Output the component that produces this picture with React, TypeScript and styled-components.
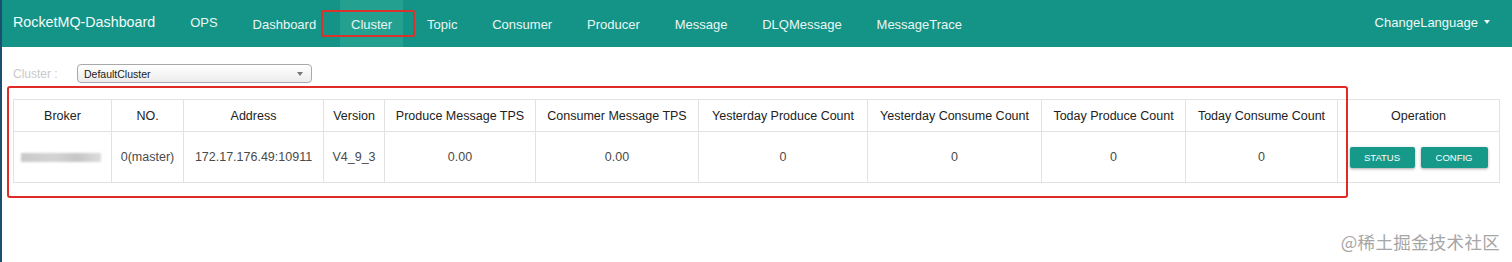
import React from "react";
import styled, { createGlobalStyle } from "styled-components";

const Global = createGlobalStyle`
  html, body { margin: 0; padding: 0; background: #fff; }
  body { font-family: "Liberation Sans", Arial, sans-serif; }
`;

const Page = styled.div`
  position: relative;
  min-height: 262px;
  border-left: 2px solid #1b4f70;
  box-sizing: border-box;
  overflow: hidden;
`;

const NavBar = styled.nav`
  height: 47px;
  background: #139486;
  display: flex;
  align-items: stretch;
  color: #f2fbfa;
`;

const Brand = styled.div`
  display: flex;
  align-items: center;
  padding: 0 0 3px 11px;
  margin-right: 24px;
  font-size: 14.3px;
  color: #f4fbfa;
`;

const NavList = styled.ul`
  list-style: none;
  margin: 0;
  padding: 0;
  display: flex;
  gap: 12.85px;
  flex: 1;
`;

const NavItem = styled.li<{ $active?: boolean; $raised?: boolean }>`
  position: relative;
  display: flex;
  align-items: center;
  padding: ${(p) => (p.$raised ? "0 11px 3px" : "1px 11px 0")};
  font-size: 13px;
  color: #eaf6f4;
  background: ${(p) => (p.$active ? "#24a091" : "transparent")};
`;

const Annotation = styled.span`
  position: absolute;
  left: -19px;
  right: -12px;
  top: 10px;
  bottom: 10px;
  border: 2px solid #d8332c;
  border-radius: 2px;
  pointer-events: none;
`;

const Lang = styled.div`
  display: flex;
  align-items: center;
  gap: 6px;
  padding: 0 22px 3px 0;
  font-size: 13px;
  color: #eef8f6;
`;

const Caret = styled.span<{ $color: string }>`
  width: 0;
  height: 0;
  border-left: 3.5px solid transparent;
  border-right: 3.5px solid transparent;
  border-top: 4px solid ${(p) => p.$color};
`;

const Content = styled.div`
  position: relative;
  padding: 17px 11px 0 11px;
`;

const FilterRow = styled.div`
  display: flex;
  align-items: center;
  height: 19px;
`;

const FilterLabel = styled.span`
  width: 64px;
  font-size: 12px;
  color: #c9c9c9;
`;

const Select = styled.div`
  width: 235px;
  height: 19px;
  box-sizing: border-box;
  border: 1px solid #a9a9a9;
  border-radius: 4px;
  background: linear-gradient(#ffffff, #ececec);
  display: flex;
  align-items: center;
  justify-content: space-between;
  padding: 0 8px 0 6px;
  font-size: 10.5px;
  color: #222;
`;

const Table = styled.table`
  margin-top: 16px;
  width: 1486px;
  border-collapse: collapse;
  table-layout: fixed;
  font-size: 12.5px;
`;

const HeadCell = styled.th`
  height: 31px;
  padding: 0;
  border: 1px solid #e2e2e2;
  font-weight: normal;
  color: #222;
  text-align: center;
  white-space: nowrap;
`;

const Cell = styled.td`
  height: 50px;
  padding: 0;
  border: 1px solid #e2e2e2;
  color: #4a4a4a;
  text-align: center;
  white-space: nowrap;
`;

const Blur = styled.div`
  width: 80px;
  height: 9px;
  margin: 0 auto 0 7px;
  background: linear-gradient(90deg, #c9c9c9, #d4d4d4 40%, #c6c6c6 70%, #dddddd);
  filter: blur(1.3px);
`;

const Buttons = styled.div`
  display: flex;
  justify-content: center;
  gap: 6px;
`;

const Button = styled.button<{ $w: number }>`
  width: ${(p) => p.$w}px;
  height: 21px;
  border: none;
  border-radius: 2px;
  background: #17998a;
  color: #fff;
  font-family: "Liberation Sans", Arial, sans-serif;
  font-size: 9.5px;
  padding: 0;
  box-shadow: 0 1px 3px rgba(0, 0, 0, 0.35);
`;

const Highlight = styled.div`
  position: absolute;
  left: 5px;
  top: 39px;
  width: 1337px;
  height: 108px;
  border: 2px solid #e02a25;
  border-radius: 3px;
  pointer-events: none;
`;

const Watermark = styled.div`
  position: absolute;
  right: 12px;
  top: 229px;
  font-family: "Noto Sans CJK SC", sans-serif;
  font-size: 17.5px;
  color: #a6a6a6;
  letter-spacing: 0.3px;
`;

const navItems = [
  "Dashboard",
  "Cluster",
  "Topic",
  "Consumer",
  "Producer",
  "Message",
  "DLQMessage",
  "MessageTrace",
];

const columns: { title: string; width: number }[] = [
  { title: "Broker", width: 98 },
  { title: "NO.", width: 72 },
  { title: "Address", width: 140 },
  { title: "Version", width: 61 },
  { title: "Produce Message TPS", width: 151 },
  { title: "Consumer Message TPS", width: 163 },
  { title: "Yesterday Produce Count", width: 169 },
  { title: "Yesterday Consume Count", width: 174 },
  { title: "Today Produce Count", width: 144 },
  { title: "Today Consume Count", width: 152 },
  { title: "Operation", width: 162 },
];

const values = ["0(master)", "172.17.176.49:10911", "V4_9_3", "0.00", "0.00", "0", "0", "0", "0"];

export default function App() {
  return (
    <Page>
      <Global />
      <NavBar>
        <Brand>RocketMQ-Dashboard</Brand>
        <NavList>
          <NavItem $raised>OPS</NavItem>
          {navItems.map((n) => (
            <NavItem key={n} $active={n === "Cluster"}>
              {n}
              {n === "Cluster" && <Annotation />}
            </NavItem>
          ))}
        </NavList>
        <Lang>
          ChangeLanguage
          <Caret $color="#eef8f6" />
        </Lang>
      </NavBar>
      <Content>
        <FilterRow>
          <FilterLabel>Cluster :</FilterLabel>
          <Select>
            DefaultCluster
            <Caret $color="#777" />
          </Select>
        </FilterRow>
        <Table>
          <colgroup>
            {columns.map((c) => (
              <col key={c.title} style={{ width: c.width }} />
            ))}
          </colgroup>
          <thead>
            <tr>
              {columns.map((c) => (
                <HeadCell key={c.title}>{c.title}</HeadCell>
              ))}
            </tr>
          </thead>
          <tbody>
            <tr>
              <Cell>
                <Blur />
              </Cell>
              {values.map((v, i) => (
                <Cell key={i}>{v}</Cell>
              ))}
              <Cell>
                <Buttons>
                  <Button $w={65}>STATUS</Button>
                  <Button $w={67}>CONFIG</Button>
                </Buttons>
              </Cell>
            </tr>
          </tbody>
        </Table>
        <Highlight />
      </Content>
      <Watermark>@稀土掘金技术社区</Watermark>
    </Page>
  );
}
